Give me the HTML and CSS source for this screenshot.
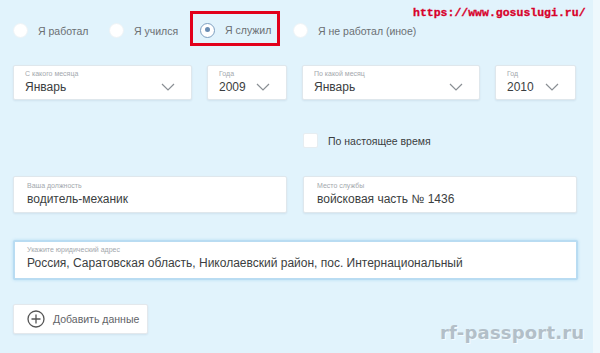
FILE: index.html
```html
<!DOCTYPE html>
<html>
<head>
    <title>Трудовая деятельность</title>
    <meta charset="utf-8">
    <link rel="stylesheet" href="styles.css">
</head>
<body>
    <div class="page">
        <div class="site-url">https://www.gosuslugi.ru/</div>

        <!-- вид деятельности -->
        <div class="radio-row">
            <label class="radio w1"><span class="dot"></span>Я работал</label>
            <label class="radio w2"><span class="dot"></span>Я учился</label>
            <div class="marked">
                <label class="radio"><span class="dot checked"></span>Я служил</label>
            </div>
            <label class="radio w4"><span class="dot"></span>Я не работал (иное)</label>
        </div>

        <!-- период -->
        <div class="period-row">
            <div class="field select">
                <span class="field-label">С какого месяца</span>
                <span class="field-value">Январь</span>
                <svg class="chev" width="14" height="8" viewBox="0 0 14 8"><path d="M1 1l6 6 6-6" fill="none" stroke="#8a8f94" stroke-width="1.2"/></svg>
            </div>
            <div class="field select">
                <span class="field-label">Года</span>
                <span class="field-value">2009</span>
                <svg class="chev" width="14" height="8" viewBox="0 0 14 8"><path d="M1 1l6 6 6-6" fill="none" stroke="#8a8f94" stroke-width="1.2"/></svg>
            </div>
            <div class="field select">
                <span class="field-label">По какой месяц</span>
                <span class="field-value">Январь</span>
                <svg class="chev" width="14" height="8" viewBox="0 0 14 8"><path d="M1 1l6 6 6-6" fill="none" stroke="#8a8f94" stroke-width="1.2"/></svg>
            </div>
            <div class="field select">
                <span class="field-label">Год</span>
                <span class="field-value">2010</span>
                <svg class="chev" width="14" height="8" viewBox="0 0 14 8"><path d="M1 1l6 6 6-6" fill="none" stroke="#8a8f94" stroke-width="1.2"/></svg>
            </div>
        </div>

        <div class="two-cols now-row">
            <label class="check"><span class="box"></span>По настоящее время</label>
        </div>

        <!-- должность и место -->
        <div class="two-cols text-row">
            <div class="field text">
                <span class="field-label">Ваша должность</span>
                <span class="field-value">водитель-механик</span>
            </div>
            <div class="field text">
                <span class="field-label">Место службы</span>
                <span class="field-value">войсковая часть № 1436</span>
            </div>
        </div>

        <div class="field address">
            <span class="field-label">Укажите юридический адрес</span>
            <span class="field-value">Россия, Саратовская область, Николаевский район, пос. Интернациональный</span>
        </div>

        <button class="add-btn">
            <svg width="18" height="18" viewBox="0 0 18 18"><circle cx="9" cy="9" r="8" fill="none" stroke="#555" stroke-width="1.3"/><path d="M9 4.5v9M4.5 9h9" stroke="#555" stroke-width="1.3"/></svg>
            Добавить данные
        </button>

        <div class="watermark">rf-passport.ru</div>
    </div>
</body>
</html>
```
FILE: styles.css
```css
/* основа */
body {
    margin: 0;
    background: #eef8fd;
    font-family: "Liberation Sans", Arial, sans-serif;
    color: #333;
}
.page {
    position: relative;
    width: 593px;
    height: 353px;
    background: #e1f3fc;
    padding: 11px 0 0 13px;
    box-sizing: border-box;
    overflow: hidden;
}
.site-url {
    position: absolute;
    top: 6px;
    left: 413px;
    font-family: "Liberation Mono", monospace;
    font-weight: bold;
    font-size: 11.5px;
    color: #d8002a;
    -webkit-text-stroke: 0.3px #d8002a;
}

/* радио-кнопки */
.radio-row {
    display: flex;
    align-items: center;
    height: 35px;
}
.radio {
    display: flex;
    align-items: center;
    gap: 10px;
    font-size: 10.5px;
    color: #6b6f73;
    padding-top: 4px;
    white-space: nowrap;
}
.radio.w1 { width: 96px; }
.radio.w2 { width: 77px; }
.radio.w4 { margin-left: 13px; }
.dot {
    width: 15px;
    height: 15px;
    border-radius: 50%;
    background: #fff;
    box-sizing: border-box;
    border: 1px solid #eef3f6;
    position: relative;
}
.dot.checked {
    border: 1.5px solid #7d9fc0;
}
.dot.checked::after {
    content: "";
    position: absolute;
    left: 3.5px;
    top: 3.5px;
    width: 5px;
    height: 5px;
    border-radius: 50%;
    background: #6a8db3;
}
.marked {
    margin-left: 4px;
    width: 90px;
    height: 35px;
    box-sizing: border-box;
    border: 3px solid #e2001b;
    padding-left: 7px;
    display: flex;
    align-items: center;
}
.marked .radio { padding-top: 3px; }

/* поля */
.field {
    background: #fff;
    border: 1px solid #dfe7ec;
    border-radius: 2px;
    box-shadow: 0 1px 2px rgba(0, 40, 80, 0.08);
    box-sizing: border-box;
    position: relative;
    display: flex;
    flex-direction: column;
}
.field-label {
    font-size: 7px;
    line-height: 9px;
    color: #a3a8ad;
    white-space: nowrap;
}
.field-value {
    color: #3b3e41;
    white-space: nowrap;
}

.period-row {
    display: grid;
    grid-template-columns: 179px 80px 178px 81px;
    column-gap: 15px;
    margin-top: 19px;
}
.select {
    height: 35px;
    padding: 3px 10px 0 11px;
}
.select .field-value {
    font-size: 12px;
    line-height: 15px;
    margin-top: 2px;
}
.chev {
    position: absolute;
    right: 16px;
    top: 17px;
}

.two-cols {
    display: grid;
    grid-template-columns: 274px 274px;
    column-gap: 16px;
}
.now-row {
    margin-top: 33px;
    height: 14px;
}
.check {
    grid-column: 2;
    display: flex;
    align-items: center;
    gap: 10px;
    font-size: 10.5px;
    color: #3a3d40;
}
.check .box {
    width: 13px;
    height: 13px;
    background: #fff;
    border-radius: 2px;
    border: 1px solid #e6edf1;
}

.text-row {
    margin-top: 29px;
}
.text {
    height: 37px;
    padding: 4px 12px 0 13px;
}
.text .field-value {
    font-size: 12px;
    line-height: 16px;
    margin-top: 1px;
}

.address {
    margin-top: 27px;
    width: 565px;
    height: 40px;
    border: 2px solid #b9dcf2;
    padding: 3px 12px 0 12px;
    box-shadow: 0 0 3px rgba(120, 190, 235, 0.45);
}
.address .field-value {
    font-size: 12px;
    line-height: 16px;
    margin-top: 1px;
}

/* кнопка */
.add-btn {
    margin-top: 24px;
    width: 135px;
    height: 30px;
    display: flex;
    align-items: center;
    gap: 8px;
    padding: 0 0 0 13px;
    background: #fff;
    border: 1px solid #e3e8ec;
    border-radius: 2px;
    box-shadow: 0 1px 2px rgba(0, 40, 80, 0.08);
    font-family: "Liberation Sans", Arial, sans-serif;
    font-size: 10.5px;
    color: #5f6367;
    white-space: nowrap;
}

.watermark {
    position: absolute;
    left: 440px;
    top: 322px;
    font-family: "DejaVu Sans", Verdana, sans-serif;
    font-weight: bold;
    font-size: 18px;
    letter-spacing: 0.2px;
    color: #b3bfc8;
    text-shadow: 1px 1px 0 #f4fbff;
}
```
